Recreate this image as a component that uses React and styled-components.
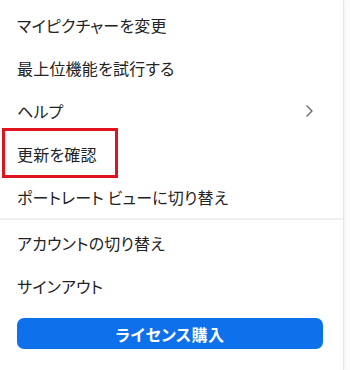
import React from 'react';
import styled, { createGlobalStyle } from 'styled-components';

const GlobalStyle = createGlobalStyle`
  html, body {
    margin: 0;
    padding: 0;
    background: #ffffff;
  }
  body {
    font-family: "Noto Sans CJK JP", "Noto Sans", sans-serif;
    font-feature-settings: "palt";
  }
`;

const Page = styled.div`
  width: 350px;
  height: 370px;
  overflow: hidden;
  background: #fcfcfc;
`;

const Menu = styled.div`
  width: 344px;
  height: 370px;
  box-sizing: border-box;
  padding-top: 3px;
  background: #ffffff;
  border-right: 1px solid #e6e6e6;
  box-shadow: 1px 0 3px rgba(0, 0, 0, 0.04);
  display: flex;
  flex-direction: column;
`;

const Item = styled.div`
  position: relative;
  height: 43px;
  display: flex;
  align-items: center;
  justify-content: space-between;
  padding: 0 29px 0 17px;
  font-size: 16px;
  color: #232323;
  letter-spacing: 0.2px;
  cursor: default;
`;

const Highlight = styled.div`
  position: absolute;
  left: 2px;
  top: -4px;
  width: 116px;
  height: 50px;
  box-sizing: border-box;
  border: 3px solid #e0141e;
  pointer-events: none;
`;

const Divider = styled.div`
  height: 2px;
  background: #f0f0f0;
  margin: 0 0 1px;
`;

const BuyButton = styled.button`
  margin: 11px 0 0 17px;
  width: 306px;
  height: 31px;
  border: none;
  border-radius: 7px;
  background: #0e71eb;
  color: #ffffff;
  font-family: inherit;
  font-feature-settings: "palt";
  font-size: 16px;
  font-weight: 700;
  letter-spacing: 0.5px;
  cursor: pointer;
`;

const Chevron = () => (
  <svg width="9" height="14" viewBox="0 0 9 14" fill="none">
    <path d="M2 2 L7 7 L2 12" stroke="#6b6b6b" strokeWidth="1.4" strokeLinecap="round" strokeLinejoin="round" />
  </svg>
);

export default function App() {
  return (
    <>
      <GlobalStyle />
      <Page>
        <Menu>
          <Item>マイピクチャーを変更</Item>
          <Item>最上位機能を試行する</Item>
          <Item>
            ヘルプ
            <Chevron />
          </Item>
          <Item>
            更新を確認
            <Highlight />
          </Item>
          <Item>ポートレート ビューに切り替え</Item>
          <Divider />
          <Item>アカウントの切り替え</Item>
          <Item>サインアウト</Item>
          <BuyButton>ライセンス購入</BuyButton>
        </Menu>
      </Page>
    </>
  );
}
